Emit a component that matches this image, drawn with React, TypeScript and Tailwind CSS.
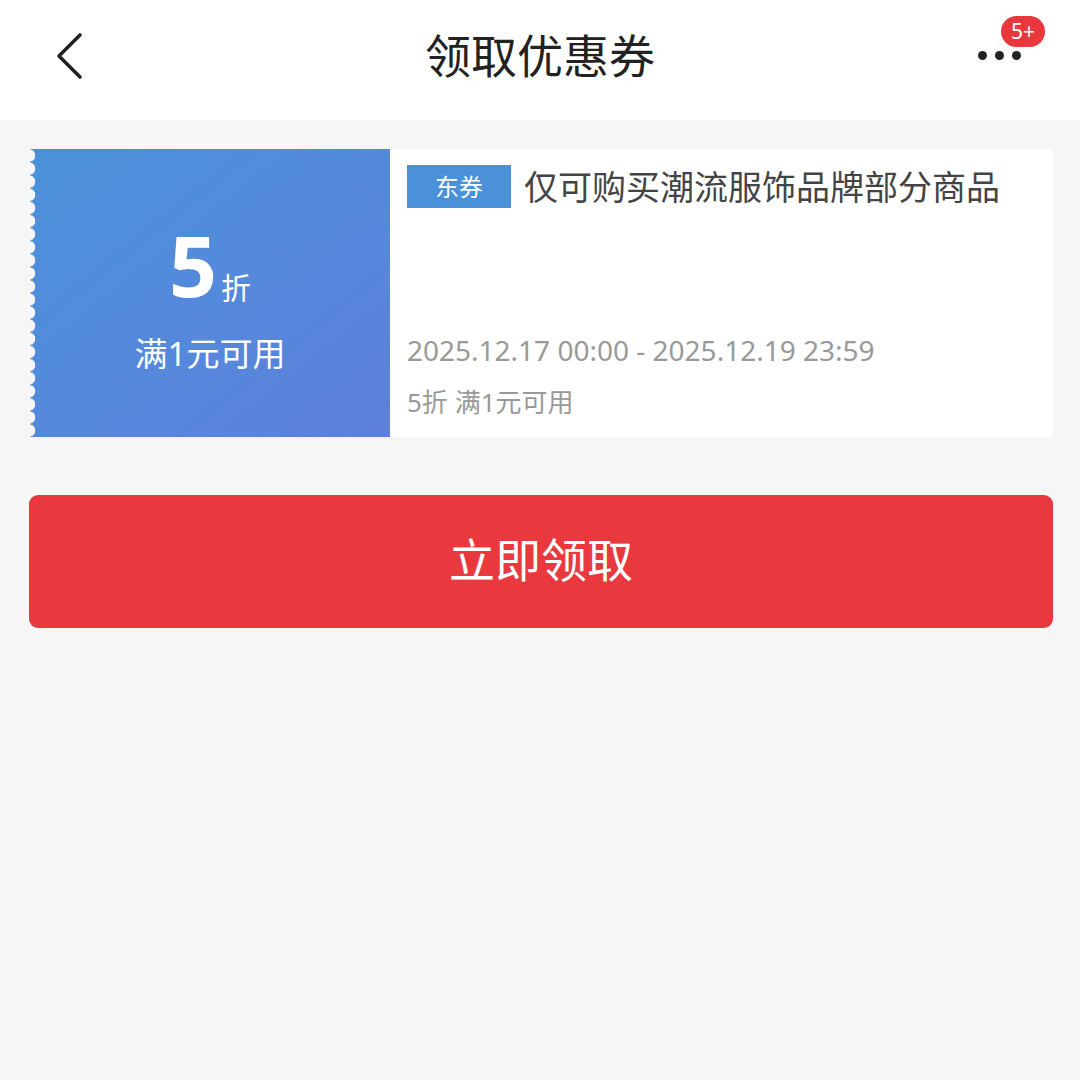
const font = { fontFamily: '"Noto Sans", "Noto Sans CJK SC", sans-serif' };

export default function App() {
  return (
    <div className="flex min-h-[1080px] w-[1080px] flex-col bg-[#f6f6f6]" style={font}>
      {/* header */}
      <header className="relative flex h-[120px] items-center justify-center bg-white">
        <button className="absolute left-[52px] top-[32px] text-[#222]">
          <svg width="34" height="48" viewBox="0 0 34 48" fill="none">
            <polyline points="28,3 7,24 28,45" stroke="currentColor" strokeWidth="3.6" strokeLinecap="round" strokeLinejoin="round" />
          </svg>
        </button>
        <h1 className="-mt-[10px] text-[46px] font-normal text-[#222]">领取优惠券</h1>
        <div className="absolute right-[59px] top-[51px] flex gap-[8px]">
          <span className="h-[9px] w-[9px] rounded-full bg-[#222]" />
          <span className="h-[9px] w-[9px] rounded-full bg-[#222]" />
          <span className="h-[9px] w-[9px] rounded-full bg-[#222]" />
        </div>
        <span className="absolute right-[35px] top-[16px] flex h-[31px] min-w-[44px] items-center justify-center rounded-full bg-[#e8383d] px-[6px] text-[21px] leading-none text-white">
          5+
        </span>
      </header>

      <main className="flex flex-col pl-[29px] pr-[27px] pt-[29px]">
        {/* coupon */}
        <div className="ml-[1px] flex h-[288px] bg-white">
          <div className="relative flex w-[360px] shrink-0 flex-col items-center justify-center bg-gradient-to-br from-[#4a91d9] to-[#5d80dd] text-white">
            <div className="absolute -left-[6px] top-0 h-full w-[12px] bg-[radial-gradient(circle_at_5px_50%,#f6f6f6_6px,transparent_6.6px)] bg-[length:12px_13.1px] bg-repeat-y" />
            <div className="mt-[6px] flex items-end">
              <span className="text-[84px] font-bold leading-none">5</span>
              <span className="mb-[4px] ml-[4px] text-[30px] leading-none">折</span>
            </div>
            <div className="mt-[30px] text-[33px] leading-none">满1元可用</div>
          </div>
          <div className="flex flex-1 flex-col pl-[17px] pt-[16px]">
            <div className="flex items-center">
              <span className="flex h-[43px] w-[104px] items-center justify-center bg-[#4a91d9] text-[24px] text-white">东券</span>
              <span className="ml-[13px] text-[34px] leading-none text-[#444]">仅可购买潮流服饰品牌部分商品</span>
            </div>
            <div className="mt-auto pb-[22px]">
              <div className="text-[28px] leading-none text-[#999]">2025.12.17 00:00 - 2025.12.19 23:59</div>
              <div className="mt-[25px] text-[26px] leading-none text-[#999]">5折 满1元可用</div>
            </div>
          </div>
        </div>

        <button className="mt-[58px] flex h-[133px] items-center justify-center rounded-[9px] bg-[#e9393f] pb-[4px] text-[46px] text-white">
          立即领取
        </button>
      </main>
    </div>
  );
}
